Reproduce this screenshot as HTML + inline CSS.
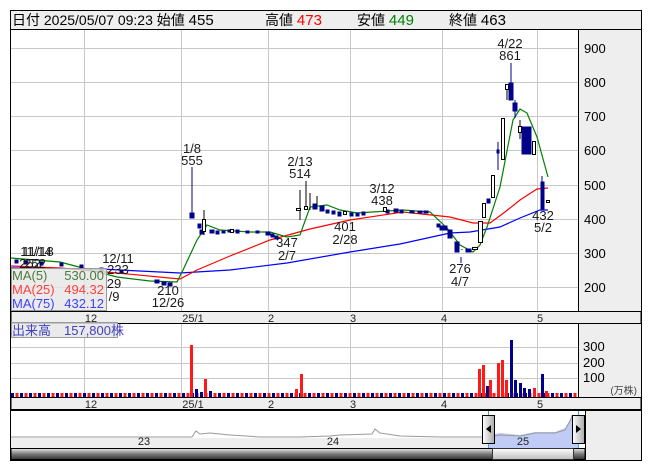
<!DOCTYPE html>
<html><head><meta charset="utf-8"><style>
html,body{margin:0;padding:0;background:#fff;}
svg{display:block;font-family:"Liberation Sans","Noto Sans CJK JP",sans-serif;}
</style></head><body>
<svg width="653" height="470" viewBox="0 0 653 470" xmlns="http://www.w3.org/2000/svg">
<defs>
<pattern id="vb" x="11" y="0" width="9" height="10" patternUnits="userSpaceOnUse">
<rect x="0" y="0" width="3" height="10" fill="#00008b"/><rect x="4.5" y="0" width="3" height="10" fill="#ff1a1a"/>
</pattern>
<linearGradient id="sb" x1="0" y1="0" x2="0" y2="1"><stop offset="0" stop-color="#e8e8e8"/><stop offset="0.5" stop-color="#7a7a7a"/><stop offset="1" stop-color="#333"/></linearGradient>
<linearGradient id="th" x1="0" y1="0" x2="0" y2="1"><stop offset="0" stop-color="#fff"/><stop offset="1" stop-color="#bbb"/></linearGradient>
<linearGradient id="hd" x1="0" y1="0" x2="1" y2="0"><stop offset="0" stop-color="#fff"/><stop offset="1" stop-color="#aaa"/></linearGradient>
</defs>
<!-- header -->
<rect x="10.5" y="10.5" width="631" height="19" fill="#eeeeee" stroke="#000"/>
<text x="12" y="25" font-size="14" fill="#000">日付 2025/05/07 09:23 始値 <tspan font-size="15">455</tspan></text>
<text x="265" y="25" font-size="14">高値 <tspan fill="#ff0000" font-size="15">473</tspan></text>
<text x="357" y="25" font-size="14">安値 <tspan fill="#008000" font-size="15">449</tspan></text>
<text x="449" y="25" font-size="14">終値 <tspan font-size="15">463</tspan></text>
<!-- main frame -->
<rect x="10.5" y="29.5" width="631" height="431" fill="none" stroke="#000"/>
<rect x="578" y="30" width="63" height="281" fill="#eeeeee"/>
<line x1="578.5" y1="30" x2="578.5" y2="311" stroke="#000"/>
<!-- price grid -->
<g stroke="#c8c8c8" stroke-width="1">
<line x1="11" y1="48.5" x2="578" y2="48.5"/><line x1="11" y1="82.5" x2="578" y2="82.5"/><line x1="11" y1="116.5" x2="578" y2="116.5"/><line x1="11" y1="150.5" x2="578" y2="150.5"/><line x1="11" y1="185.5" x2="578" y2="185.5"/><line x1="11" y1="219.5" x2="578" y2="219.5"/><line x1="11" y1="253.5" x2="578" y2="253.5"/><line x1="11" y1="287.5" x2="578" y2="287.5"/>
<line x1="84.5" y1="30" x2="84.5" y2="311"/><line x1="181.5" y1="30" x2="181.5" y2="311"/><line x1="268.5" y1="30" x2="268.5" y2="311"/><line x1="350.5" y1="30" x2="350.5" y2="311"/><line x1="442.5" y1="30" x2="442.5" y2="311"/><line x1="537.5" y1="30" x2="537.5" y2="311"/>
</g>
<g font-size="13" fill="#000">
<text x="584" y="53">900</text><text x="584" y="87">800</text><text x="584" y="121">700</text><text x="584" y="155">600</text><text x="584" y="190">500</text><text x="584" y="224">400</text><text x="584" y="258">300</text><text x="584" y="292">200</text>
</g>
<!-- MA lines -->
<polyline fill="none" stroke="#0000ff" stroke-width="1.2" points="11,268 100,269 180,273 230,270 287,263 350,252 400,244 450,233 470,232 500,227 520,218 540,210 548,210"/>
<polyline fill="none" stroke="#ff0000" stroke-width="1.2" points="11,266 60,268 117,273 180,279 197,270 230,256 270,240 310,229 350,220 403,212 450,217 473,223 490,223 505,212 520,200 537,189 548,188"/>
<polyline fill="none" stroke="#008000" stroke-width="1.2" points="11,258 60,262 117,277 150,281 177,282 183,270 197,240 207,225 220,230 250,232 270,232 287,237 300,235 310,207 327,205 340,210 357,213 403,210 430,212 447,228 460,245 473,252 480,245 487,227 500,187 513,120 520,109 527,113 537,137 548,177"/>
<!-- candles -->
<g fill="#00008b" stroke="#00008b" stroke-width="1">
<rect x="15" y="260" width="3" height="3"/><rect x="24" y="261" width="3" height="3"/><rect x="40" y="262" width="3" height="3"/><rect x="60" y="263" width="3" height="3"/><rect x="80" y="265" width="3" height="3"/><rect x="100" y="268" width="3" height="3"/><rect x="120" y="270" width="3" height="3"/>
<rect x="155" y="280" width="4" height="3"/><rect x="162" y="282" width="4" height="3"/><rect x="168" y="283" width="4" height="3"/>
<line x1="192" y1="167" x2="192" y2="214"/><rect x="190" y="213" width="4" height="5"/><rect x="198" y="224" width="3" height="4"/><rect x="200" y="230" width="3" height="4"/>
<rect x="210" y="230" width="4" height="3"/><rect x="216" y="231" width="3" height="3"/><rect x="222" y="231" width="3" height="2"/><rect x="228" y="230" width="4" height="2"/><rect x="236" y="230" width="3" height="3"/><rect x="246" y="231" width="3" height="2"/><rect x="256" y="231" width="3" height="2"/><rect x="266" y="232" width="4" height="3"/><rect x="271" y="234" width="3" height="3"/><rect x="275" y="236" width="3" height="3"/>
<rect x="313" y="204" width="4" height="5"/><rect x="320" y="206" width="4" height="5"/><rect x="326" y="210" width="3" height="3"/><rect x="332" y="211" width="3" height="3"/><rect x="338" y="212" width="3" height="4"/><rect x="350" y="213" width="3" height="3"/><rect x="356" y="213" width="3" height="3"/><rect x="362" y="212" width="3" height="3"/><rect x="386" y="210" width="3" height="3"/><rect x="394" y="209" width="4" height="3"/><rect x="400" y="210" width="3" height="3"/><rect x="410" y="211" width="4" height="2"/><rect x="418" y="211" width="4" height="2"/><rect x="424" y="211" width="4" height="2"/>
<rect x="437" y="224" width="3" height="3"/><rect x="440" y="226" width="7" height="4"/><rect x="448" y="230" width="4" height="8"/><rect x="455" y="242" width="4" height="10"/><line x1="461" y1="257" x2="461" y2="263"/><rect x="466" y="249" width="5" height="3"/>
<rect x="487" y="199" width="3" height="4"/><line x1="498" y1="142" x2="498" y2="170"/><rect x="497" y="150" width="2" height="3"/>
<line x1="511" y1="63" x2="511" y2="100"/><rect x="509" y="83" width="4" height="17"/><line x1="515" y1="100" x2="515" y2="118"/><rect x="513" y="103" width="4" height="8"/><rect x="522" y="127" width="9" height="27"/><line x1="542" y1="176" x2="542" y2="210"/><rect x="541" y="182" width="3" height="27"/>
</g>
<g fill="#fff" stroke="#000" stroke-width="1">
<line x1="204" y1="210" x2="204" y2="235"/><rect x="202.5" y="219.5" width="3" height="12"/><rect x="230.5" y="229.5" width="3" height="3"/>
<line x1="300" y1="190" x2="300" y2="220"/><line x1="306" y1="181" x2="306" y2="210"/><line x1="310" y1="193" x2="310" y2="210"/><rect x="304.5" y="206.5" width="3" height="3"/><rect x="296.5" y="208.5" width="4" height="2"/><line x1="317" y1="196" x2="317" y2="206"/><rect x="343.5" y="211.5" width="3" height="3"/><rect x="383.5" y="207.5" width="3" height="4"/>
<line x1="462" y1="249" x2="462" y2="250"/><rect x="472.5" y="247.5" width="5" height="2"/><rect x="478.5" y="221.5" width="4" height="21"/><rect x="482.5" y="203.5" width="3" height="14"/><rect x="491.5" y="175.5" width="3" height="22"/><rect x="501.5" y="118.5" width="3" height="41"/><line x1="507" y1="84" x2="507" y2="100"/><rect x="505.5" y="84.5" width="3" height="5"/><line x1="520" y1="120" x2="520" y2="139"/><rect x="518.5" y="126.5" width="3" height="6"/><rect x="532.5" y="141.5" width="3" height="13"/><rect x="546.5" y="200.5" width="3" height="2"/>
</g>
<g font-size="13" fill="#1a1a1a" text-anchor="middle">
<text x="36" y="256">11/14</text><text x="38" y="256">11/18</text><text x="30" y="268">252</text><text x="35" y="268">252</text>
<text x="118" y="263">12/11</text><text x="118" y="274">233</text><text x="114" y="288">29</text><text x="114" y="301">/9</text>
<text x="168" y="295">210</text><text x="168" y="307">12/26</text>
<text x="192" y="153">1/8</text><text x="192" y="165">555</text>
<text x="300" y="166">2/13</text><text x="300" y="178">514</text>
<text x="287" y="247">347</text><text x="287" y="260">2/7</text>
<text x="345" y="231">401</text><text x="345" y="244">2/28</text>
<text x="382" y="193">3/12</text><text x="382" y="205">438</text>
<text x="460" y="273">276</text><text x="460" y="286">4/7</text>
<text x="510" y="48">4/22</text><text x="510" y="60">861</text>
<text x="543" y="220">432</text><text x="543" y="232">5/2</text>
</g>
<!-- MA legend -->
<rect x="11.5" y="268.5" width="95" height="42" fill="#e6e6e6" fill-opacity="0.8" stroke="#999"/>
<text x="12" y="280" font-size="13" fill="#4b7a3a">MA(5)</text><text x="104" y="280" font-size="13" fill="#4b7a3a" text-anchor="end">530.00</text>
<text x="12" y="294" font-size="13" fill="#ff4040">MA(25)</text><text x="104" y="294" font-size="13" fill="#ff4040" text-anchor="end">494.32</text>
<text x="12" y="308" font-size="13" fill="#4040ff">MA(75)</text><text x="104" y="308" font-size="13" fill="#4040ff" text-anchor="end">432.12</text>
<!-- date axis 1 -->
<rect x="11" y="311.5" width="630" height="12" fill="#eeeeee" stroke="#000"/>
<g font-size="11" fill="#222" text-anchor="middle"><text x="91" y="322">12</text><text x="193" y="322">25/1</text><text x="271" y="322">2</text><text x="353" y="322">3</text><text x="444" y="322">4</text><text x="540" y="322">5</text></g>
<!-- volume -->
<rect x="578" y="324" width="63" height="73" fill="#eeeeee"/>
<line x1="578.5" y1="324" x2="578.5" y2="397" stroke="#000"/>
<g stroke="#c8c8c8"><line x1="11" y1="347.5" x2="578" y2="347.5"/><line x1="11" y1="363.5" x2="578" y2="363.5"/><line x1="11" y1="378.5" x2="578" y2="378.5"/>
<line x1="84.5" y1="324" x2="84.5" y2="397"/><line x1="181.5" y1="324" x2="181.5" y2="397"/><line x1="268.5" y1="324" x2="268.5" y2="397"/><line x1="350.5" y1="324" x2="350.5" y2="397"/><line x1="442.5" y1="324" x2="442.5" y2="397"/><line x1="537.5" y1="324" x2="537.5" y2="397"/></g>
<rect x="11" y="393" width="567" height="4" fill="url(#vb)"/>
<g fill="#ff1a1a"><rect x="190" y="345" width="3" height="52"/><rect x="204" y="379" width="3" height="18"/><rect x="295" y="389" width="3" height="8"/><rect x="300" y="374" width="3" height="23"/><rect x="478" y="369" width="3" height="28"/><rect x="482" y="365" width="3" height="32"/><rect x="489" y="380" width="3" height="17"/><rect x="497" y="363" width="3" height="34"/><rect x="501" y="360" width="3" height="37"/><rect x="505" y="380" width="3" height="17"/><rect x="533" y="388" width="3" height="9"/><rect x="545" y="391" width="3" height="6"/></g>
<g fill="#00008b"><rect x="195" y="389" width="3" height="8"/><rect x="200" y="392" width="3" height="5"/><rect x="209" y="391" width="3" height="6"/><rect x="486" y="386" width="3" height="11"/><rect x="510" y="340" width="3" height="57"/><rect x="514" y="380" width="3" height="17"/><rect x="519" y="383" width="3" height="14"/><rect x="523" y="388" width="3" height="9"/><rect x="528" y="389" width="3" height="8"/><rect x="541" y="374" width="3" height="23"/></g>
<g font-size="13" fill="#000"><text x="583" y="351">300</text><text x="583" y="367">200</text><text x="583" y="382">100</text></g>
<text x="637" y="394" font-size="10" fill="#444" text-anchor="end">(万株)</text>
<rect x="11.5" y="322.5" width="106" height="15" fill="#e6e6e6" fill-opacity="0.85" stroke="#999"/>
<text x="12" y="335" font-size="13" fill="#4040c0">出来高　157,800株</text>
<!-- date axis 2 -->
<rect x="11" y="397.5" width="630" height="12" fill="#eeeeee" stroke="#000"/>
<g font-size="11" fill="#222" text-anchor="middle"><text x="91" y="408">12</text><text x="193" y="408">25/1</text><text x="271" y="408">2</text><text x="353" y="408">3</text><text x="444" y="408">4</text><text x="540" y="408">5</text></g>
<!-- navigator -->
<rect x="11" y="438" width="567" height="10" fill="#eeeeee"/>
<polygon points="488,435 500,433 520,435 535,432 555,432 565,428 570,420 572,415 574,418 578,416 578,448 488,448" fill="#c0ccf5"/>
<polyline fill="none" stroke="#999" stroke-width="1" points="11,437 100,437 150,437 192,437 196,431 200,434 210,433 230,435 260,437 300,437 330,436 340,435 372,434 375,429 380,433 400,436 440,437 488,437 500,435 520,436 535,433 555,433 565,430 570,421 572,416 574,419 578,417"/>
<g font-size="11" fill="#222" text-anchor="middle"><text x="144" y="445">23</text><text x="333" y="445">24</text><text x="523" y="445">25</text></g>
<line x1="488.5" y1="411" x2="488.5" y2="448" stroke="#4aa0d8"/><line x1="578.5" y1="411" x2="578.5" y2="448" stroke="#4aa0d8"/>
<rect x="482.5" y="415.5" width="12" height="28" fill="url(#hd)" stroke="#000"/><polygon points="486,429 491,425 491,433" fill="#000"/>
<rect x="572.5" y="415.5" width="12" height="28" fill="url(#hd)" stroke="#000"/><polygon points="581,429 576,425 576,433" fill="#000"/>
<rect x="585" y="411" width="56" height="49" fill="#eeeeee"/>
<line x1="585.5" y1="411" x2="585.5" y2="460" stroke="#000"/>
<rect x="11" y="448.5" width="574" height="11" fill="url(#sb)" stroke="#000"/>
<rect x="492.5" y="448.5" width="81" height="11" fill="url(#th)" stroke="#333"/>
<line x1="11" y1="410.5" x2="641" y2="410.5" stroke="#000"/>
<rect x="10.5" y="10.5" width="631" height="450" fill="none" stroke="#000"/>
</svg>
</body></html>
